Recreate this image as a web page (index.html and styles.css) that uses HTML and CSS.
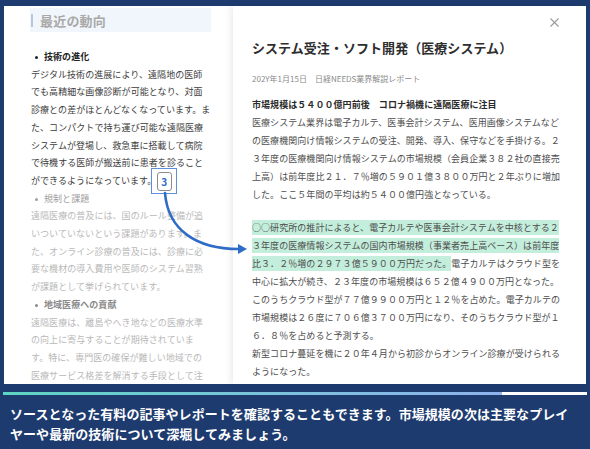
FILE: index.html
```html
<!DOCTYPE html>
<html lang="ja">
<head>
<meta charset="utf-8">
<link rel="stylesheet" href="styles.css">
</head>
<body>
<div class="screen">
  <div class="stage">
    <section class="side">
      <div class="side-head"><span class="side-bar"></span><span class="side-title">最近の動向</span></div>
      <div class="side-body">
        <div class="bullet b-dark">技術の進化</div>
        <div class="ln dark">デジタル技術の進展により、遠隔地の医師</div>
        <div class="ln dark">でも高精細な画像診断が可能となり、対面</div>
        <div class="ln dark">診療との差がほとんどなくなっています。ま</div>
        <div class="ln dark">た、コンパクトで持ち運び可能な遠隔医療</div>
        <div class="ln dark">システムが登場し、救急車に搭載して病院</div>
        <div class="ln dark">で待機する医師が搬送前に患者を診ること</div>
        <div class="ln dark">ができるようになっています。<span class="badge"><span class="badge-in">3</span></span></div>
        <div class="bullet b-fade">規制と課題</div>
        <div class="ln fade">遠隔医療の普及には、国のルール整備が追</div>
        <div class="ln fade">いついていないという課題があります。ま</div>
        <div class="ln fade">た、オンライン診療の普及には、診療に必</div>
        <div class="ln fade">要な機材の導入費用や医師のシステム習熟</div>
        <div class="ln fade">が課題として挙げられています。</div>
        <div class="bullet b-mid">地域医療への貢献</div>
        <div class="ln fade">遠隔医療は、離島やへき地などの医療水準</div>
        <div class="ln fade">の向上に寄与することが期待されていま</div>
        <div class="ln fade">す。特に、専門医の確保が難しい地域での</div>
        <div class="ln fade">医療サービス格差を解消する手段として注</div>
      </div>
    </section>
    <section class="modal">
      <span class="close"><svg width="9" height="9" viewBox="0 0 9 9"><path d="M0.5 0.5L8.5 8.5M8.5 0.5L0.5 8.5" stroke="#9a9a9a" stroke-width="1.1" fill="none"/></svg></span>
      <h1 class="title">システム受注・ソフト開発（医療システム）</h1>
      <div class="meta">202Y年1月15日　日経NEEDS業界解説レポート</div>
      <div class="sec-head">市場規模は５４００億円前後　コロナ禍機に遠隔医療に注目</div>
      <div class="para">
        <div class="ml">医療システム業界は電子カルテ、医事会計システム、医用画像システムなど</div>
        <div class="ml">の医療機関向け情報システムの受注、開発、導入、保守などを手掛ける。２</div>
        <div class="ml">３年度の医療機関向け情報システムの市場規模（会員企業３８２社の直接売</div>
        <div class="ml">上高）は前年度比２１．７％増の５９０１億３８００万円と２年ぶりに増加</div>
        <div class="ml">した。ここ５年間の平均は約５４００億円強となっている。</div>
      </div>
      <div class="para para2">
        <div class="ml"><mark class="hl">○○研究所の推計によると、電子カルテや医事会計システムを中核とする２</mark></div>
        <div class="ml"><mark class="hl">３年度の医療情報システムの国内市場規模（事業者売上高ベース）は前年度</mark></div>
        <div class="ml"><mark class="hl">比３．２％増の２９７３億５９００万円だった。</mark>電子カルテはクラウド型を</div>
        <div class="ml">中心に拡大が続き、２３年度の市場規模は６５２億４９００万円となった。</div>
        <div class="ml">このうちクラウド型が７７億９９００万円と１２％を占めた。電子カルテの</div>
        <div class="ml">市場規模は２６度に７０６億３７００万円になり、そのうちクラウド型が１</div>
        <div class="ml">６．８％を占めると予測する。</div>
        <div class="ml">新型コロナ蔓延を機に２０年４月から初診からオンライン診療が受けられる</div>
        <div class="ml">ようになった。</div>
      </div>
    </section>
  </div>
  <div class="progress"><div class="progress-fill"></div></div>
  <p class="caption">ソースとなった有料の記事やレポートを確認することもできます。市場規模の次は主要なプレイヤーや最新の技術について深堀してみましょう。</p>
  <svg class="arrow" width="590" height="449" viewBox="0 0 590 449">
    <path d="M165 193 C 168 230, 196 249, 239 249" stroke="#2e6cc8" stroke-width="2.6" fill="none" stroke-linecap="round"/>
    <polygon points="238,244 247,249 238,254" fill="#2e6cc8"/>
  </svg>
</div>
</body>
</html>
```
FILE: styles.css
```css
* { box-sizing: border-box; }
html, body { margin: 0; padding: 0; }
body {
  width: 590px;
  height: 449px;
  overflow: hidden;
  background: #1e3b6f;
  font-family: "Noto Sans CJK JP", "Noto Sans", sans-serif;
}
.screen {
  position: relative;
  width: 590px;
  height: 449px;
}
.stage {
  display: flex;
  padding: 6px 4px 0 4px;
  height: 384px;
}
.side {
  width: 229px;
  flex: none;
  background: #fff;
  overflow: hidden;
}
.side-head {
  margin: 2px 0 0 26px;
  width: 181px;
  height: 24px;
  background: #f1f6fc;
  display: flex;
  align-items: center;
}
.side-bar {
  width: 2px;
  height: 13px;
  background: #b7c6da;
  margin-left: 1px;
}
.side-title {
  margin-left: 7px;
  font-size: 13px;
  font-weight: 700;
  color: #a9a9a9;
  letter-spacing: 0.2px;
}
.side-body {
  padding: 16px 0 0 27px;
  font-size: 9px;
  line-height: 17.7px;
  letter-spacing: 0.06px;
  white-space: nowrap;
}
.bullet {
  position: relative;
  padding-left: 13px;
}
.bullet::before {
  content: "";
  position: absolute;
  left: 4px;
  top: 8px;
  width: 3px;
  height: 3px;
  border-radius: 50%;
  background: currentColor;
}
.b-dark { color: #222; font-weight: 700; }
.b-fade { color: #a0a0a0; }
.b-mid { color: #8a8a8a; font-weight: 700; }
.dark { color: #3c3c3c; }
.fade { color: #b9b9b9; }
.badge {
  display: inline-flex;
  align-items: center;
  justify-content: center;
  width: 26px;
  height: 26px;
  margin: -5px 0 -5px -5px;
  border: 1.5px solid #5d8fd9;
  background: #fff;
  vertical-align: middle;
}
.badge-in {
  display: flex;
  align-items: center;
  justify-content: center;
  width: 15px;
  height: 19px;
  border: 1px solid #8c8c8c;
  border-radius: 3px;
  font-size: 10px;
  font-weight: 700;
  color: #2e6cc8;
}
.modal {
  position: relative;
  flex: 1;
  background: #fff;
  padding: 0 20px 0 19px;
  box-shadow: -3px 0 6px rgba(0, 0, 0, 0.07);
  overflow: hidden;
  white-space: nowrap;
}
.close {
  position: absolute;
  top: 12px;
  right: 27px;
  width: 9px;
  height: 9px;
  display: flex;
}
.title {
  margin: 33px 0 0 0;
  font-size: 13px;
  line-height: 18px;
  font-weight: 700;
  color: #2e2e2e;
  letter-spacing: 0.05px;
}
.meta {
  margin-top: 16px;
  font-size: 8px;
  line-height: 12px;
  color: #8a8a8a;
}
.sec-head {
  margin-top: 11px;
  font-size: 9px;
  line-height: 18px;
  font-weight: 700;
  color: #2a2a2a;
  letter-spacing: 0.06px;
}
.para {
  font-size: 9px;
  line-height: 18px;
  color: #4d4d4d;
  letter-spacing: 0.06px;
}
.para2 { margin-top: 15px; }
.hl {
  background: #c4eedc;
  color: #4d4d4d;
  padding: 1px 0;
}
.progress {
  margin: 8px 3px 0 3px;
  height: 3px;
  background: #ffffff;
}
.progress-fill {
  width: 499px;
  height: 3px;
  background: linear-gradient(90deg, #5fd5c3 0%, #79c5da 50%, #8fb3ee 100%);
}
.caption {
  margin: 9px 0 0 0;
  padding: 0 10px;
  font-size: 13px;
  line-height: 20px;
  font-weight: 700;
  color: #fff;
  letter-spacing: 0.05px;
}
.arrow {
  position: absolute;
  left: 0;
  top: 0;
  pointer-events: none;
}
```
